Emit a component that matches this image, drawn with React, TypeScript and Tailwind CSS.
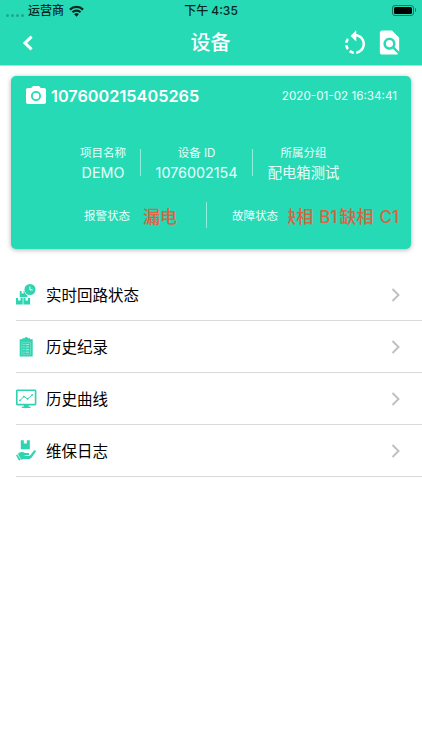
import type { ReactNode } from "react";
import { MdFindInPage, MdPhotoCamera, MdRotateLeft } from "react-icons/md";

type MenuItem = { label: string; icon: ReactNode };

const BoxesClockIcon = () => (
  <svg viewBox="0 0 20 21" className="w-5 h-[21px]" fill="#2ed3b0">
    <circle cx="14" cy="5.5" r="5.5" />
    <path d="M13.9 2.5v3.4h2.8" fill="none" stroke="#fff" strokeWidth="1" />
    <path d="M3.8 7h1.8v2.4h2V7h.6c.4 2 1.5 3.5 3.2 4.2v2.1H3.8z" />
    <path d="M0 14.1h2.1v2.3h2.4v-2.3h2.2v6.5H0zM7.4 14.1h2.1v2.3h2.4v-2.3h2.2v6.5H7.4z" />
  </svg>
);

const ClipboardIcon = () => (
  <svg viewBox="0 0 20 21" className="w-5 h-[21px]">
    <path d="M3.7 3.2h13v17.3h-13z" fill="#2ed3b0" />
    <path d="M6.4 4V2.2h2.3a1.6 1.6 0 0 1 3.1 0H14V5H6.4z" fill="#2ed3b0" />
    <path d="M5.8 6.2h8.8v12.2H5.8z" fill="none" stroke="#8ee6d2" strokeWidth=".6" />
    <path d="M7.2 8.4h1.4m1 0H13M7.2 11h1.4m1 0H13M7.2 13.6h1.4m1 0H13M7.2 16.2h1.4m1 0H13" stroke="#b5efe2" strokeWidth=".9" />
  </svg>
);

const MonitorIcon = () => (
  <svg viewBox="0 0 21 20" className="w-[21px] h-5" fill="none" stroke="#2ed3b0">
    <rect x=".8" y="1.2" width="18.8" height="14.4" rx=".6" strokeWidth="1.6" />
    <path d="M4 11.5l3.8-4 3.8 2.4 4.8-4.2" strokeWidth="1" />
    <g fill="#2ed3b0" stroke="none">
      <circle cx="4" cy="11.4" r=".9" />
      <circle cx="7.8" cy="7.6" r=".9" />
      <circle cx="11.6" cy="9.8" r=".9" />
      <circle cx="16.2" cy="5.8" r=".9" />
      <path d="M8 16h4.4l.5 1.7h1.7V19H5.8v-1.3h1.7z" />
    </g>
  </svg>
);

const HandBoxIcon = () => (
  <svg viewBox="0 0 20 21" className="w-5 h-[21px]" fill="#2ed3b0">
    <path d="M4.8.2h3v3.4h3V.2h3v9h-9z" />
    <path d="M2.6 13.3c1.9-1.6 4.4-1.9 6.3-.4h3.2c1.5 0 1.6 1.9.1 2.1l-3.4.4c-.5.1-.5.7 0 .7h4c.6 0 1.1-.3 1.6-.8l3.4-4.5c1-1.2 2.7-.2 1.8 1.2l-4.2 5.8c-.6.7-1.3 1.1-2.2 1.1H8.4c-1.3 0-2.2.1-3.1.9l-3.4-5.7z" />
    <path d="M0 15.3l1.3-.8 3.4 5.1-1.6 1.1z" />
  </svg>
);

const menuItems: MenuItem[] = [
  { label: "实时回路状态", icon: <BoxesClockIcon /> },
  { label: "历史纪录", icon: <ClipboardIcon /> },
  { label: "历史曲线", icon: <MonitorIcon /> },
  { label: "维保日志", icon: <HandBoxIcon /> },
];

const StatusBar = () => (
  <div className="grid grid-cols-3 items-center h-5 pt-px pl-[6px] pr-[6px] text-[12px] leading-5 font-medium text-[#06261f]">
    <div className="flex items-center">
      <div className="flex gap-[2px] pt-2 mr-[4px]">
        {[0, 1, 2, 3].map((dot) => (
          <span key={dot} className="w-[3px] h-[3px] rounded-full bg-[#1ba88b]" />
        ))}
      </div>
      <span>运营商</span>
      <svg viewBox="0 0 16 12" className="w-[15px] h-[12px] ml-[5px] -mt-px" fill="none" stroke="#06261f" strokeWidth="2.4">
        <path d="M1 4.5a10 10 0 0 1 14 0M3.7 7.3a6.1 6.1 0 0 1 8.6 0" />
        <path d="M8 12L5.5 9.4a3.5 3.5 0 0 1 5 0z" fill="#06261f" stroke="none" />
      </svg>
    </div>
    <div className="text-center">下午 4:35</div>
    <div className="flex items-center justify-end gap-[1px] -mt-[2px]">
      <div className="w-[22px] h-[11px] rounded-[3px] border border-[#14735f] p-[1px]">
        <div className="w-full h-full rounded-[1.5px] bg-black" />
      </div>
      <span className="w-[1.5px] h-1 rounded-r-full bg-[#14735f]" />
    </div>
  </div>
);

const Header = () => (
  <header className="h-[66px] bg-[#27dab6] border-b border-[#8eeeda]">
    <StatusBar />
    <div className="grid grid-cols-3 items-center h-[46px] pl-[20px] pr-[20px]">
      <svg viewBox="0 0 12 16" className="ml-[2px] w-3 h-4" fill="none" stroke="#fff" strokeWidth="3">
        <path d="M9.6 1.6L3 8l6.6 6.4" />
      </svg>
      <h1 className="-ml-px text-center text-[20px] leading-[46px] font-medium text-white">设备</h1>
      <div className="-mr-[2px] flex justify-end gap-[5px] text-white">
        <MdRotateLeft className="mt-px w-[30px] h-[30px]" />
        <MdFindInPage className="w-[29px] h-[29px]" />
      </div>
    </div>
  </header>
);

const Field = ({ label, value }: { label: string; value: string }) => (
  <div className="flex flex-col items-center whitespace-nowrap text-[#eafffa]">
    <span className="text-[11.5px] leading-5">{label}</span>
    <span className="text-[14.3px] leading-5">{value}</span>
  </div>
);

const DeviceCard = () => (
  <section className="mx-[11px] mt-[10px] h-[173px] rounded-[5px] bg-[#27dab6] shadow-[0_1px_5px_rgba(0,0,0,0.3)]">
    <div className="flex items-center h-10 pl-[13px] pr-[14px] text-white">
      <MdPhotoCamera className="w-6 h-6" />
      <span className="ml-[3px] text-[16.3px] font-semibold">107600215405265</span>
      <span className="ml-auto pt-[2px] text-[11.7px] text-[#eafffa]">2020-01-02 16:34:41</span>
    </div>

    <div className="flex items-start mt-[27px] h-10 pl-[69px]">
      <div className="w-[46px] flex justify-center">
        <Field label="项目名称" value="DEMO" />
      </div>
      <span className="mt-[6px] ml-[14px] w-px h-[27px] bg-[#8eeeda]" />
      <div className="w-[111px] flex justify-center">
        <Field label="设备 ID" value="1076002154" />
      </div>
      <span className="mt-[6px] w-px h-[27px] bg-[#8eeeda]" />
      <div className="w-[101px] flex justify-center">
        <Field label="所属分组" value="配电箱测试" />
      </div>
    </div>

    <div className="flex items-center mt-[20px] h-6 pl-[73px] whitespace-nowrap">
      <span className="w-[46px] pt-[3px] text-[11.5px] text-[#eafffa]">报警状态</span>
      <span className="ml-[13px] w-[63px] pt-[3px] text-[17px] leading-6 font-medium text-[#dc6340]">漏电</span>
      <span className="w-px h-[26px] bg-[#8eeeda]" />
      <span className="ml-[25px] w-[46px] pt-[3px] text-[11.5px] text-[#eafffa]">故障状态</span>
      <div className="ml-[10px] w-[112px] pt-[3px] pr-px overflow-hidden flex justify-end gap-[2px] text-[17px] leading-6 font-medium [word-spacing:1.5px] text-[#dc6340]">
        <span>缺相 B1</span>
        <span>缺相 C1</span>
      </div>
    </div>
  </section>
);

const App = () => (
  <div className="w-[422px] h-[750px] overflow-hidden bg-white font-[Inter,'Noto_Sans_CJK_SC',sans-serif]">
    <Header />
    <DeviceCard />
    <ul className="mt-5">
      {menuItems.map((item) => (
        <li key={item.label} className="ml-4 h-[52px] flex items-center border-b border-[#d9d9db]">
          <span className="w-[21px]">{item.icon}</span>
          <span className="ml-[9px] pt-[2px] text-[15.5px] text-black">{item.label}</span>
          <svg viewBox="0 0 9 14" className="ml-auto mr-[22px] w-[9px] h-[14px]" fill="none" stroke="#bfbfc3" strokeWidth="1.9">
            <path d="M1.5 1L7.5 7l-6 6" />
          </svg>
        </li>
      ))}
    </ul>
  </div>
);

export default App;
